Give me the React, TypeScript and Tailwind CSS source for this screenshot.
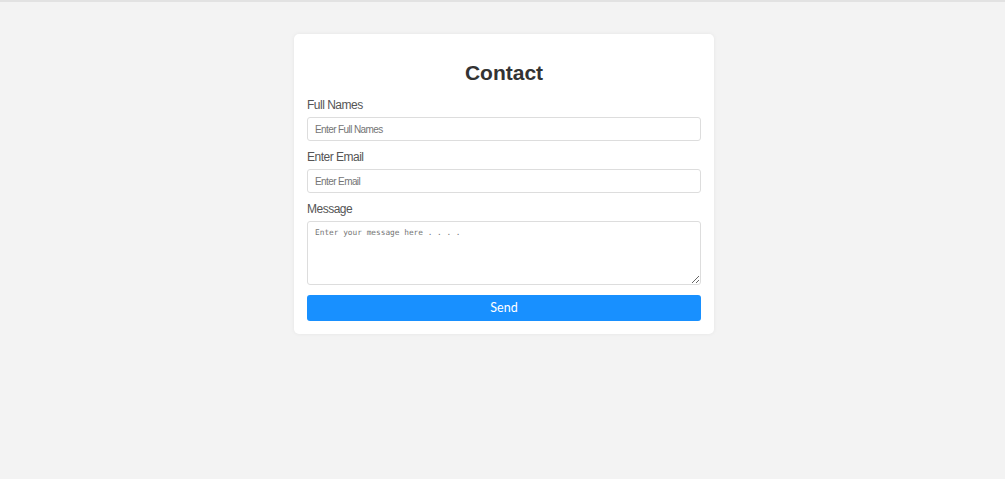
export default function App() {
  return (
    <div className="min-h-[479px] w-full bg-[#f3f3f3] border-t-2 border-[#e2e2e2] pl-[3px] font-['Liberation_Sans',Arial,sans-serif]">
      <div className="mx-auto mt-[32px] w-[420px] rounded-[5px] bg-white p-[13px] shadow-[0_0_4px_rgba(0,0,0,0.06)]">
        <h2 className="mt-[14px] mb-[13px] text-center text-[21px] leading-[24px] font-bold text-[#333]">
          Contact
        </h2>

        <form className="flex flex-col" onSubmit={(e) => e.preventDefault()}>
          <label className="mb-[5px] block text-[12px] leading-[14px] tracking-[-0.5px] text-[#555]">Full Names</label>
          <input
            type="text"
            placeholder="Enter Full Names"
            className="mb-[9px] block h-[24px] w-full rounded-[3px] border border-[#ddd] px-[7px] text-[10px] tracking-[-0.6px] placeholder:text-[#757575] outline-none"
          />

          <label className="mb-[5px] block text-[12px] leading-[14px] tracking-[-0.5px] text-[#555]">Enter Email</label>
          <input
            type="email"
            placeholder="Enter Email"
            className="mb-[9px] block h-[24px] w-full rounded-[3px] border border-[#ddd] px-[7px] text-[10px] tracking-[-0.6px] placeholder:text-[#757575] outline-none"
          />

          <label className="mb-[5px] block text-[12px] leading-[14px] tracking-[-0.5px] text-[#555]">Message</label>
          <textarea
            placeholder="Enter your message here . . . ."
            className="mb-[10px] block h-[64px] w-full rounded-[3px] border border-[#ddd] px-[7px] py-[5px] font-['DejaVu_Sans_Mono',monospace] text-[7.8px] placeholder:text-[#757575] outline-none"
          />

          <button
            type="submit"
            className="block h-[26px] w-full rounded-[3px] bg-[#1890ff] font-['Lato',sans-serif] text-[12.5px] text-white"
          >
            Send
          </button>
        </form>
      </div>
    </div>
  );
}
